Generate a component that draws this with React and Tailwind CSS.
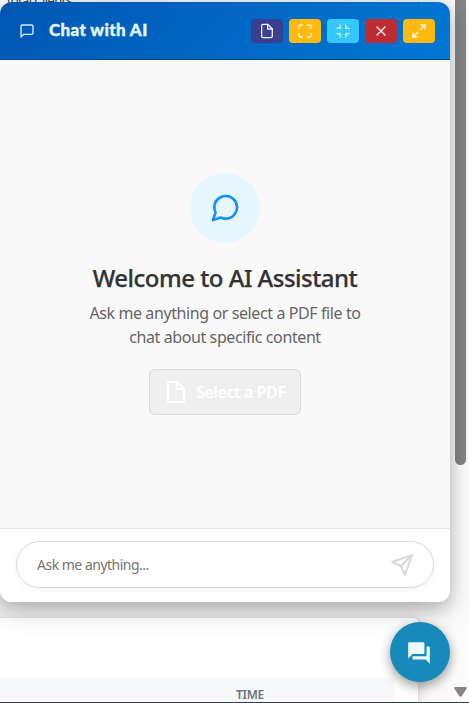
import React from "react";
import {
  FiMessageSquare,
  FiFile,
  FiMaximize,
  FiMinimize,
  FiX,
  FiMaximize2,
  FiMessageCircle,
  FiSend,
} from "react-icons/fi";
import { MdQuestionAnswer } from "react-icons/md";

const actions = [
  { Icon: FiFile, label: "PDF", color: "bg-[#3a3f94]" },
  { Icon: FiMaximize, label: "Maximize", color: "bg-[#ffb90f]" },
  { Icon: FiMinimize, label: "Minimize", color: "bg-[#33c8ff]" },
  { Icon: FiX, label: "Close", color: "bg-[#bd2c30]" },
  { Icon: FiMaximize2, label: "Expand", color: "bg-[#ffb90f]" },
];

function Header() {
  return (
    <header className="flex h-[58px] shrink-0 items-center justify-between border-b border-[#004a94] bg-linear-135 from-[#0056b3] to-[#0078d4] pr-[15px] pl-[19px]">
      <div className="flex items-center">
        <FiMessageSquare size={16} strokeWidth={2} className="mt-px text-[#d6ecff]" />
        <h1 className="ml-3.5 -mt-px font-['Lato'] text-[17px] leading-6 font-black tracking-[0.36px] whitespace-nowrap text-[#e3f5ff] [-webkit-text-stroke:0.4px_#e3f5ff]">
          Chat with AI
        </h1>
      </div>
      <div className="flex gap-1.5">
        {actions.map(({ Icon, label, color }) => (
          <button
            key={label}
            aria-label={label}
            className={`flex h-6 w-8 items-center justify-center rounded ${color} text-white/90`}
          >
            <Icon size={16} strokeWidth={2} />
          </button>
        ))}
      </div>
    </header>
  );
}

function Welcome() {
  return (
    <main className="flex flex-1 flex-col items-center bg-[#f9f9f9] pt-[113px]">
      <div className="flex size-[70px] items-center justify-center rounded-full bg-[#e6f7ff] text-[#1890ff]">
        <FiMessageCircle size={32} />
      </div>
      <h2 className="mt-[17px] text-[24px] leading-9 font-medium tracking-[-0.52px] whitespace-nowrap text-[#333] [-webkit-text-stroke:0.25px_#333]">
        Welcome to AI Assistant
      </h2>
      <p className="mt-[5px] text-center text-[16px] leading-6 tracking-[-0.4px] whitespace-nowrap text-[#666]">
        Ask me anything or select a PDF file to
        <br />
        chat about specific content
      </p>
      <button className="mt-5 flex h-[46px] w-[152px] items-center rounded-md border border-[#dcdcdc] bg-[#efefef] pl-3.5 text-white">
        <FiFile size={24} />
        <span className="ml-2 text-[16px] font-semibold tracking-[-0.4px] whitespace-nowrap">
          Select a PDF
        </span>
      </button>
    </main>
  );
}

function Composer() {
  return (
    <footer className="h-[74px] shrink-0 border-t border-[#e6e6e6] bg-white px-4 pt-3">
      <div className="flex h-[47px] items-center justify-between rounded-full border border-[#d9d9d9] pr-[19px] pl-5 shadow-[0_2px_6px_rgba(0,0,0,0.05)]">
        <span className="text-[14px] tracking-[-0.5px] text-[#757575]">Ask me anything...</span>
        <FiSend size={24} className="text-[#d9d9d9]" />
      </div>
    </footer>
  );
}

function PageBehind() {
  return (
    <div className="flex h-full">
      <div className="flex w-[452px] flex-col">
        <div className="h-[590px] w-[419px] shrink-0 border-r border-[#e5e5e5]">
          <p className="-mt-[10px] pl-[5px] text-[13px] leading-5 tracking-[-0.6px] text-[#444]">
            Total Clients
          </p>
        </div>
        <div className="h-[27px] shrink-0 bg-linear-to-r from-[#efefef] from-90% to-[#f9f9f9]" />
        <div className="w-[419px] flex-1 rounded-tr border-t border-r border-[#e0e0e0] bg-white pt-[60px] shadow-[0_4px_12px_rgba(0,0,0,0.15)]">
          <div className="h-full w-[394px] bg-[#f7f8fa] pt-2 pl-[236px] text-[12px] leading-[18px] font-semibold tracking-[-0.3px] text-[#6c757d]">
            TIME
          </div>
        </div>
      </div>
      <div className="flex flex-1 flex-col items-center justify-between bg-[#fbfbfb] pb-[5px]">
        <div className="h-[465px] w-[11px] rounded-b-full bg-[#858585]" />
        <svg width="13" height="10" viewBox="0 0 13 10" fill="#858585">
          <path d="M1.4 0h10.2q1.8.2.9 1.7L8 8.7q-1.5 2-3 0L.5 1.7Q-.4.2 1.4 0Z" />
        </svg>
      </div>
    </div>
  );
}

export default function App() {
  return (
    <div className="relative h-[703px] w-[469px] overflow-hidden border-b border-[#343c49] bg-[#f9f9f9] font-['Noto_Sans',sans-serif]">
      <PageBehind />
      <section className="absolute top-0.5 left-0 flex h-[600px] w-[450px] flex-col overflow-hidden rounded-xl shadow-[0_8px_30px_rgba(0,0,0,0.16),0_4px_16px_rgba(0,0,0,0.18)]">
        <Header />
        <Welcome />
        <Composer />
      </section>
      <button
        aria-label="Open chat"
        className="absolute top-[622px] left-[390px] flex size-[60px] items-center justify-center rounded-full bg-[#168bbb] pt-0.5 pr-0.5 text-[#edf8ff] shadow-[0_4px_12px_rgba(0,0,0,0.4)]"
      >
        <MdQuestionAnswer size={26} />
      </button>
    </div>
  );
}
